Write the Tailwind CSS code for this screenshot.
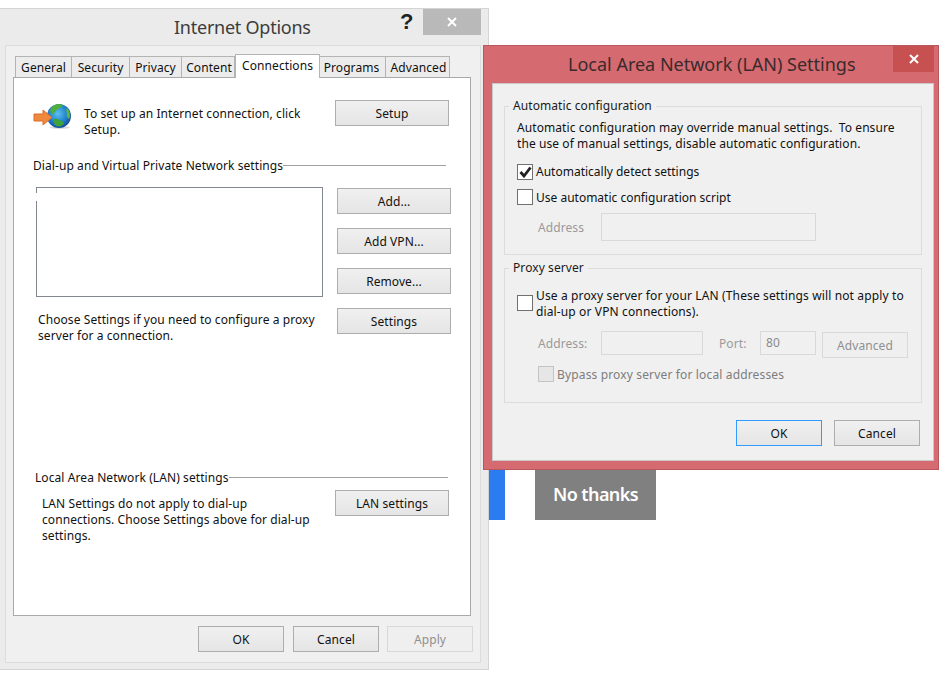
<!DOCTYPE html>
<html>
<head>
<meta charset="utf-8">
<script src="https://cdn.jsdelivr.net/npm/@tailwindcss/browser@4"></script>
</head>
<body class="bg-white">
<div class="relative w-[939px] h-[674px] overflow-hidden bg-white font-['Noto_Sans','Open_Sans',sans-serif] text-[12px] leading-[16px] tracking-[0.08px] text-[#111]">

  <!-- Internet Options window -->
  <div class="absolute left-[-1px] top-[8px] w-[490px] h-[662px] border border-[#d4d4d4] bg-[#ebebeb] flex flex-col">
    <div class="relative h-[36px] shrink-0">
      <div class="absolute left-[174px] top-[5px] text-[18px] leading-[26px] tracking-[-0.25px] text-[#3c3c3c]">Internet Options</div>
      <div class="absolute left-[400px] top-[-1px] text-[22px] leading-[28px] font-bold font-['Liberation_Sans',sans-serif] text-[#222]">?</div>
      <div class="absolute left-[423px] top-0 w-[58px] h-[26px] bg-[#b9b9b9] flex items-center justify-center">
        <svg width="10" height="10" viewBox="0 0 10 10"><path d="M1 1 L9 9 M9 1 L1 9" stroke="#fff" stroke-width="2"/></svg>
      </div>
    </div>
    <div class="ml-[5px] mr-[7px] h-[618px] border border-[#dcdcdc] bg-[#f0f0f0] flex flex-col">
      <!-- tabs -->
      <div class="flex items-end h-[31px] pl-[9px] shrink-0">
        <div class="w-[57px] h-[21px] pt-[1px] border border-b-0 border-[#b4b4b4] bg-[#ececec] flex items-center justify-center">General</div>
        <div class="w-[58px] h-[21px] pt-[1px] border border-l-0 border-b-0 border-[#b4b4b4] bg-[#ececec] flex items-center justify-center">Security</div>
        <div class="w-[52px] h-[21px] pt-[1px] border border-l-0 border-b-0 border-[#b4b4b4] bg-[#ececec] flex items-center justify-center">Privacy</div>
        <div class="w-[53px] h-[21px] pt-[1px] pl-[2px] border border-l-0 border-b-0 border-[#b4b4b4] bg-[#ececec] flex items-center justify-center">Content</div>
        <div class="relative z-10 w-[85px] h-[24px] -mb-[1px] pb-[2px] border border-b-0 border-[#b4b4b4] bg-white flex items-center justify-center">Connections</div>
        <div class="w-[66px] h-[21px] pt-[1px] pr-[2px] border border-l-0 border-b-0 border-[#b4b4b4] bg-[#ececec] flex items-center justify-center">Programs</div>
        <div class="w-[64px] h-[21px] pt-[1px] pl-[2px] border border-l-0 border-b-0 border-[#b4b4b4] bg-[#ececec] flex items-center justify-center">Advanced</div>
      </div>
      <!-- page -->
      <div class="ml-[7px] w-[458px] h-[539px] shrink-0 border border-[#a9a9a9] bg-white flex flex-col">
        <div class="flex items-start mt-[22px] h-[26px]">
          <svg class="ml-[19px] mt-[3px]" width="40" height="26" viewBox="0 0 40 26">
            <defs>
              <radialGradient id="g" cx="0.45" cy="0.4" r="0.65">
                <stop offset="0" stop-color="#5ec0ee"/>
                <stop offset="0.6" stop-color="#1f7fd0"/>
                <stop offset="1" stop-color="#123f8a"/>
              </radialGradient>
            </defs>
            <ellipse cx="27" cy="24.5" rx="10" ry="1.5" fill="#000" opacity="0.15"/>
            <circle cx="26" cy="13" r="12" fill="url(#g)"/>
            <path d="M18 5 C21 1 27 0 30 2 C28 4 27 6 24 6 C23 9 20 10 19 12 C17 10 17 7 18 5Z" fill="#4fae3c"/>
            <path d="M34 5 C37 8 38 13 36 16 C34 15 33 12 34 10 C33 8 33 6 34 5Z" fill="#5cb545"/>
            <path d="M21 16 C24 15 28 17 31 20 C30 23 26 24 23 23 C21 21 20 18 21 16Z" fill="#3fa33a"/>
            <path d="M1 11 H10 V7 L19 14.5 L10 22 V18 H1 Z" fill="#f0883e" stroke="#d96f28" stroke-width="1"/>
          </svg>
          <p class="ml-[11px] mt-[6px] w-[240px]">To set up an Internet connection, click Setup.</p>
          <div class="ml-[11px] w-[114px] h-[26px] pt-[1px] border border-[#adadad] bg-gradient-to-b from-[#f0f0f0] to-[#e5e5e5] flex items-center justify-center">Setup</div>
        </div>
        <div class="flex items-center mt-[32px] ml-[19px] mr-[24px] h-[16px]">
          <span>Dial-up and Virtual Private Network settings</span>
          <div class="flex-1 h-px -mt-[2px] bg-[#a0a0a0]"></div>
        </div>
        <div class="flex items-start mt-[13px] ml-[22px]">
          <div class="relative w-[287px] h-[110px] border border-[#828790] bg-white">
            <div class="absolute left-[-1px] top-[5px] w-px h-[8px] bg-white"></div>
          </div>
          <div class="ml-[14px] mt-[1px] flex flex-col gap-[14px]">
            <div class="w-[114px] h-[26px] pt-[1px] border border-[#adadad] bg-gradient-to-b from-[#f0f0f0] to-[#e5e5e5] flex items-center justify-center">Add...</div>
            <div class="w-[114px] h-[26px] pt-[1px] border border-[#adadad] bg-gradient-to-b from-[#f0f0f0] to-[#e5e5e5] flex items-center justify-center">Add VPN...</div>
            <div class="w-[114px] h-[26px] pt-[1px] border border-[#adadad] bg-gradient-to-b from-[#f0f0f0] to-[#e5e5e5] flex items-center justify-center">Remove...</div>
          </div>
        </div>
        <div class="flex items-start mt-[11px] ml-[24px]">
          <p class="w-[299px] mt-[4px]">Choose Settings if you need to configure a proxy server for a connection.</p>
          <div class="w-[114px] h-[26px] pt-[1px] border border-[#adadad] bg-gradient-to-b from-[#f0f0f0] to-[#e5e5e5] flex items-center justify-center">Settings</div>
        </div>
        <div class="flex items-center mt-[126px] ml-[21px] mr-[22px] h-[16px]">
          <span>Local Area Network (LAN) settings</span>
          <div class="flex-1 h-px -mt-[2px] bg-[#a0a0a0]"></div>
        </div>
        <div class="flex items-start mt-[4px] ml-[28px]">
          <p class="w-[272px] mr-[21px] mt-[6px]">LAN Settings do not apply to dial-up connections. Choose Settings above for dial-up settings.</p>
          <div class="w-[114px] h-[26px] pt-[1px] border border-[#adadad] bg-gradient-to-b from-[#f0f0f0] to-[#e5e5e5] flex items-center justify-center">LAN settings</div>
        </div>
      </div>
      <!-- bottom buttons -->
      <div class="flex mt-[10px] ml-[192px] gap-[9px]">
        <div class="w-[86px] h-[26px] pt-[1px] border border-[#adadad] bg-gradient-to-b from-[#f0f0f0] to-[#e5e5e5] flex items-center justify-center">OK</div>
        <div class="w-[86px] h-[26px] pt-[1px] border border-[#adadad] bg-gradient-to-b from-[#f0f0f0] to-[#e5e5e5] flex items-center justify-center">Cancel</div>
        <div class="-ml-[1px] w-[86px] h-[26px] pt-[1px] border border-[#d9d9d9] bg-[#efefef] text-[#8f8f8f] flex items-center justify-center">Apply</div>
      </div>
    </div>
  </div>

  <!-- Background promo buttons -->
  <div class="absolute left-[489px] top-[470px] w-[16px] h-[50px] bg-[#2b7cf0]"></div>
  <div class="absolute left-[535px] top-[470px] w-[121px] h-[50px] pb-[2px] bg-[#808080] text-white text-[18px] font-semibold tracking-[-0.6px] flex items-center justify-center">No thanks</div>

  <!-- LAN settings window -->
  <div class="absolute left-[483px] top-[45px] w-[456px] h-[425px] border border-[#b9585c] bg-[#d56b70] flex flex-col">
    <div class="relative h-[37px] shrink-0">
      <div class="absolute left-[84px] top-[5px] text-[18px] leading-[26px] tracking-normal text-[#3a2a2c]">Local Area Network (LAN) Settings</div>
      <div class="absolute left-[409px] top-0 w-[41px] h-[26px] bg-[#c75050] flex items-center justify-center">
        <svg width="10" height="10" viewBox="0 0 10 10"><path d="M1 1 L9 9 M9 1 L1 9" stroke="#fff" stroke-width="2"/></svg>
      </div>
    </div>
    <div class="ml-[8px] w-[442px] h-[378px] shrink-0 border border-[#c9c9c9] bg-[#f0f0f0] pl-[11px] pt-[14px]">
      <fieldset class="w-[418px] h-[157px] border border-[#dcdcdc] pl-[12px] m-0">
        <legend class="ml-[-8px] px-[4px] leading-[16px] text-[#1a1a1a]">Automatic configuration</legend>
        <p class="mt-[6px] w-[384px]">Automatic configuration may override manual settings.&nbsp; To ensure the use of manual settings, disable automatic configuration.</p>
        <div class="flex items-center mt-[12px] h-[16px]">
          <div class="w-[16px] h-[16px] border border-[#707070] bg-white flex items-center justify-center">
            <svg width="13" height="12" viewBox="0 0 13 12"><path d="M1.5 6 L5 10 L11.5 1.5" fill="none" stroke="#222" stroke-width="2.8"/></svg>
          </div>
          <span class="ml-[3px] tracking-[0px]">Automatically detect settings</span>
        </div>
        <div class="flex items-center mt-[9px] h-[16px]">
          <div class="w-[16px] h-[16px] border border-[#707070] bg-white"></div>
          <span class="ml-[3px] mt-[2px] tracking-[0px]">Use automatic configuration script</span>
        </div>
        <div class="flex items-center mt-[8px] h-[28px]">
          <span class="ml-[21px] w-[63px] mt-[2px] text-[#9a9a9a]">Address</span>
          <div class="w-[215px] h-[28px] border border-[#d9d9d9] bg-[#f0f0f0]"></div>
        </div>
      </fieldset>
      <fieldset class="mt-[5px] w-[418px] h-[143px] border border-[#dcdcdc] pl-[12px] m-0">
        <legend class="ml-[-8px] px-[4px] leading-[16px] text-[#1a1a1a]">Proxy server</legend>
        <div class="flex items-start mt-[11px]">
          <div class="w-[16px] h-[16px] mt-[8px] border border-[#707070] bg-white shrink-0"></div>
          <p class="ml-[3px] mt-[1px] w-[380px] tracking-[0.13px]">Use a proxy server for your LAN (These settings will not apply to dial-up or VPN connections).</p>
        </div>
        <div class="flex items-start mt-[11px] h-[28px] text-[#9a9a9a]">
          <span class="ml-[21px] w-[63px] mt-[5px]">Address:</span>
          <div class="w-[102px] h-[24px] border border-[#d9d9d9] bg-[#f0f0f0]"></div>
          <span class="ml-[16px] w-[41px] mt-[5px]">Port:</span>
          <div class="w-[56px] h-[24px] border border-[#d9d9d9] bg-[#f0f0f0] pl-[5px] pt-[3px] text-[#8a8a8a]">80</div>
          <div class="ml-[6px] mt-[1px] w-[86px] h-[26px] pt-[1px] border border-[#d9d9d9] bg-[#efefef] text-[#8f8f8f] flex items-center justify-center">Advanced</div>
        </div>
        <div class="flex items-center mt-[7px] h-[16px]">
          <div class="ml-[21px] w-[16px] h-[16px] border border-[#c4c4c4] bg-[#e6e6e6]"></div>
          <span class="ml-[3px] mt-[2px] tracking-[0.15px] text-[#7d7d7d]">Bypass proxy server for local addresses</span>
        </div>
      </fieldset>
      <div class="flex justify-end gap-[12px] mt-[17px] w-[416px]">
        <div class="w-[86px] h-[26px] pt-[1px] border border-[#3399ff] bg-gradient-to-b from-[#f0f0f0] to-[#e5e5e5] flex items-center justify-center">OK</div>
        <div class="w-[86px] h-[26px] pt-[1px] border border-[#adadad] bg-gradient-to-b from-[#f0f0f0] to-[#e5e5e5] flex items-center justify-center">Cancel</div>
      </div>
    </div>
  </div>
</div>
</body>
</html>
